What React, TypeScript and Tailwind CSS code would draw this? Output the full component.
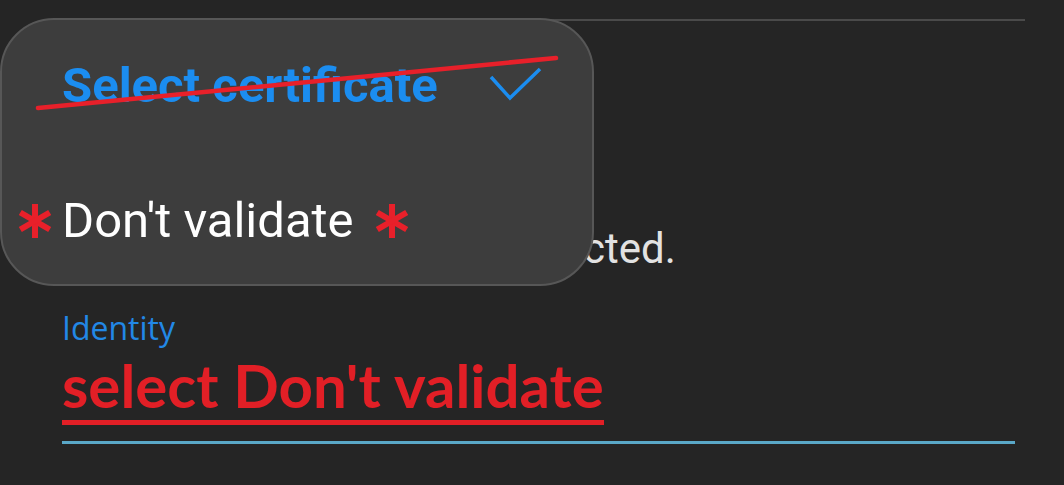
import React from "react";

function Asterisk() {
  return (
    <svg width="40" height="40" viewBox="0 0 40 40" className="shrink-0">
      <g stroke="#e8202a" strokeWidth="6" strokeLinecap="butt">
        <line x1="20" y1="3" x2="20" y2="37" />
        <line x1="5.3" y1="11.5" x2="34.7" y2="28.5" />
        <line x1="5.3" y1="28.5" x2="34.7" y2="11.5" />
      </g>
    </svg>
  );
}

function CertificateMenu() {
  return (
    <div className="absolute left-0 top-[18px] w-[594px] h-[268px] rounded-[54px] bg-[#3d3d3d] border-2 border-[#575757] pt-[38px]">
      <div className="flex items-center pl-[60px]">
        <span className="text-[49px] leading-[56px] font-bold text-[#1b8df0]">
          Select certificate
        </span>
        <svg width="56" height="40" viewBox="0 0 56 40" className="ml-[51px]">
          <polyline
            points="2,11 21,32 51,3"
            fill="none"
            stroke="#1b8df0"
            strokeWidth="3.5"
          />
        </svg>
      </div>
      <div className="flex items-center pl-[13px] mt-[79px]">
        <Asterisk />
        <span className="ml-[7px] text-[49px] leading-[56px] text-white">
          Don't validate
        </span>
        <span className="ml-[18px]">
          <Asterisk />
        </span>
      </div>
    </div>
  );
}

export default function App() {
  return (
    <div
      className="relative w-[1064px] h-[485px] overflow-hidden bg-[#252525]"
      style={{ fontFamily: "Roboto, 'Liberation Sans', sans-serif" }}
    >
      <div className="pl-[62px]">
        {/* divider */}
        <div className="pt-[19px]">
          <div className="h-[2px] w-[963px] bg-[#4a4a4a]" />
        </div>

        {/* CA certificate hint */}
        <p className="mt-[204px] text-[42px] leading-[48px] text-[#e2e2e2] whitespace-nowrap">
          Connection will not be protected.
        </p>

        {/* identity field */}
        <p
          className="mt-[32px] text-[32px] leading-[45px] text-[#2288e6]"
          style={{ fontFamily: "'Open Sans', sans-serif" }}
        >
          Identity
        </p>
        <div className="mt-[3px] inline-block">
          <p
            className="text-[60px] leading-[64px] font-bold text-[#e21f26] whitespace-nowrap"
            style={{ fontFamily: "Lato, 'Open Sans', sans-serif" }}
          >
            select Don't validate
          </p>
          <div className="mt-[3px] h-[5px] w-full bg-[#e21f26]" />
        </div>
        <div className="mt-[16px] h-[3px] w-[953px] bg-[#5aa8c8]" />
      </div>

      <CertificateMenu />

      {/* strike-through mark */}
      <svg
        className="absolute left-0 top-0 pointer-events-none"
        width="1064"
        height="485"
        viewBox="0 0 1064 485"
      >
        <line
          x1="38"
          y1="108"
          x2="556"
          y2="58"
          stroke="#e8202a"
          strokeWidth="4.5"
          strokeLinecap="round"
        />
      </svg>
    </div>
  );
}
